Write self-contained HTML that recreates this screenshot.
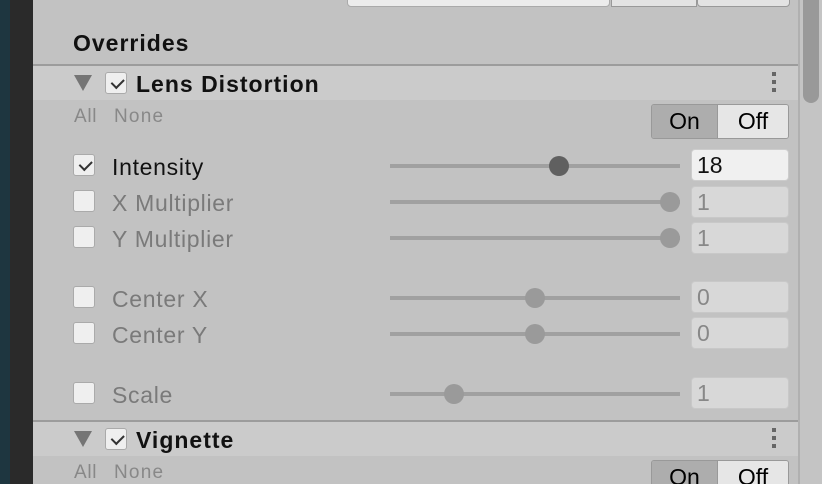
<!DOCTYPE html>
<html><head><style>
*{margin:0;padding:0;box-sizing:border-box}
html,body{width:822px;height:484px;overflow:hidden}
body{background:#c2c2c2;font-family:"Liberation Sans",sans-serif;position:relative}
.a{position:absolute}
.t{position:absolute;font-size:23px;line-height:26px;white-space:nowrap;letter-spacing:0.7px}
.cb{position:absolute;width:22px;height:22px;border:1px solid #aaa;border-radius:3px;background:#efefef}
.cb.on::after{content:"";position:absolute;left:5px;top:3px;width:10px;height:6px;border-left:2px solid #333;border-bottom:2px solid #333;transform:rotate(-45deg) translate(-1px,2px)}
.trk{position:absolute;left:390px;width:290px;height:4px;background:#a0a0a0}
.knob{position:absolute;width:20px;height:20px;border-radius:50%;background:#9a9a9a}
.fld{position:absolute;left:691px;width:98px;height:32px;border:1px solid #c8c8c8;border-radius:4px;background:#d8d8d8;color:#888;font-size:23px;line-height:31px;padding-left:5px}
.hdr{position:absolute;left:33px;width:765px;height:36px;background:#cbcbcb;border-top:2px solid #9c9c9c}
.tri{position:absolute;width:0;height:0;border-left:9px solid transparent;border-right:9px solid transparent;border-top:16px solid #757575}
.dots{position:absolute;width:4px;height:20px;background:linear-gradient(#666 0 4px,transparent 4px 8px,#666 8px 12px,transparent 12px 16px,#666 16px 20px)}
.oo{position:absolute;left:651px;width:138px;height:35px;border:1px solid #999;border-radius:3px;overflow:hidden;font-size:23px;display:flex}
.oo div{line-height:33px;text-align:center}
</style></head><body>
<div class="a" style="left:0;top:0;width:10px;height:484px;background:#1e3640"></div>
<div class="a" style="left:10px;top:0;width:23px;height:484px;background:#2a2a2a"></div>
<div class="a" style="left:798px;top:0;width:2px;height:484px;background:#b0b0b0"></div>
<div class="a" style="left:800px;top:0;width:22px;height:484px;background:#c4c4c4"></div>
<div class="a" style="left:803px;top:-10px;width:16px;height:113px;background:#999;border-radius:8px"></div>
<div class="a" style="left:347px;top:-20px;width:263px;height:27px;background:#ececec;border:1px solid #aaa;border-radius:4px"></div>
<div class="a" style="left:611px;top:-20px;width:86px;height:27px;background:#e3e3e3;border:1px solid #999"></div>
<div class="a" style="left:697px;top:-20px;width:93px;height:27px;background:#e3e3e3;border:1px solid #999;border-radius:4px"></div>
<div class="t" style="left:73px;top:30px;font-weight:bold;color:#111;letter-spacing:1px">Overrides</div>

<div class="hdr" style="top:64px"></div>
<div class="tri" style="left:74px;top:75px"></div>
<div class="cb on" style="left:105px;top:72px"></div>
<div class="t" style="left:136px;top:71px;font-weight:bold;color:#111;letter-spacing:1px">Lens Distortion</div>
<div class="dots" style="left:772px;top:72px"></div>
<div class="t" style="left:74px;top:104px;font-size:19px;color:#888">All</div>
<div class="t" style="left:114px;top:104px;font-size:19px;color:#888;letter-spacing:1.2px">None</div>
<div class="oo" style="top:104px"><div style="width:66px;background:#adadad;border-right:1px solid #999">On</div><div style="flex:1;background:#e6e6e6">Off</div></div>

<div class="cb on" style="left:73px;top:154px"></div>
<div class="t" style="left:112px;top:154px;color:#111">Intensity</div>
<div class="trk" style="top:164px"></div><div class="knob" style="left:549px;top:156px;background:#606060"></div>
<div class="fld" style="top:149px;background:#f0f0f0;color:#111;border-color:#ccc">18</div>

<div class="cb" style="left:73px;top:190px"></div>
<div class="t" style="left:112px;top:190px;color:#7a7a7a">X Multiplier</div>
<div class="trk" style="top:200px"></div><div class="knob" style="left:660px;top:192px"></div>
<div class="fld" style="top:186px">1</div>

<div class="cb" style="left:73px;top:226px"></div>
<div class="t" style="left:112px;top:226px;color:#7a7a7a">Y Multiplier</div>
<div class="trk" style="top:236px"></div><div class="knob" style="left:660px;top:228px"></div>
<div class="fld" style="top:222px">1</div>

<div class="cb" style="left:73px;top:286px"></div>
<div class="t" style="left:112px;top:286px;color:#7a7a7a">Center X</div>
<div class="trk" style="top:296px"></div><div class="knob" style="left:525px;top:288px"></div>
<div class="fld" style="top:281px">0</div>

<div class="cb" style="left:73px;top:322px"></div>
<div class="t" style="left:112px;top:322px;color:#7a7a7a">Center Y</div>
<div class="trk" style="top:332px"></div><div class="knob" style="left:525px;top:324px"></div>
<div class="fld" style="top:317px">0</div>

<div class="cb" style="left:73px;top:382px"></div>
<div class="t" style="left:112px;top:382px;color:#7a7a7a">Scale</div>
<div class="trk" style="top:392px"></div><div class="knob" style="left:444px;top:384px"></div>
<div class="fld" style="top:377px">1</div>

<div class="hdr" style="top:420px"></div>
<div class="tri" style="left:74px;top:431px"></div>
<div class="cb on" style="left:105px;top:428px"></div>
<div class="t" style="left:136px;top:427px;font-weight:bold;color:#111;letter-spacing:1px">Vignette</div>
<div class="dots" style="left:772px;top:428px"></div>
<div class="t" style="left:74px;top:460px;font-size:19px;color:#888">All</div>
<div class="t" style="left:114px;top:460px;font-size:19px;color:#888;letter-spacing:1.2px">None</div>
<div class="oo" style="top:460px"><div style="width:66px;background:#adadad;border-right:1px solid #999">On</div><div style="flex:1;background:#e6e6e6">Off</div></div>
</body></html>
